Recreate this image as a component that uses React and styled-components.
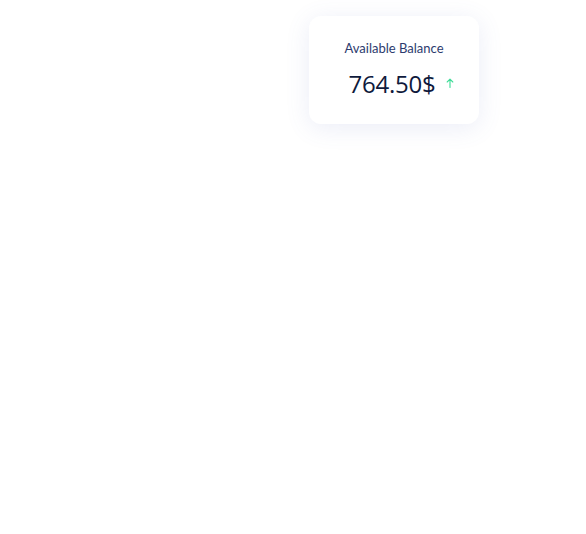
import React from 'react';
import styled, { createGlobalStyle } from "styled-components";

const Global = createGlobalStyle`
    body {
        margin: 0;
        background: #ffffff;
        font-family: "Open Sans", "Noto Sans", sans-serif;
    }
`;

export default function App() {
    return (
        <>
            <Global />
            <Page>
                <Card>
                    <Label>Available Balance</Label>
                    <Row>
                        <Amount>764.50$</Amount>
                        <Arrow viewBox="0 0 8 10" aria-hidden="true">
                            <path d="M4 9.5V1.2M1.2 4L4 1.2 6.8 4" fill="none" stroke="#3ddc97" strokeWidth="1.1" strokeLinecap="round" strokeLinejoin="round" />
                        </Arrow>
                    </Row>
                </Card>
            </Page>
        </>
    )
}

const Page = styled.main `
    width: 586px;
    height: 534px;
    display: flex;
    justify-content: flex-end;
    align-items: flex-start;
    padding: 16px 107px 0 0;
    box-sizing: border-box;
`;
const Card = styled.section `
    width: 170px;
    height: 108px;
    box-sizing: border-box;
    background: #fff;
    border-radius: 12px;
    box-shadow: 0 4px 24px rgba(90, 110, 190, 0.12);
    display: flex;
    flex-direction: column;
    align-items: center;
    padding-top: 24px;
`;
const Label = styled.span `
    font-family: Lato, "Open Sans", sans-serif;
    font-size: 13px;
    color: #2c3b6e;
    line-height: 17px;
`;
const Row = styled.div `
    display: flex;
    align-items: center;
    gap: 10px;
    margin-top: 12px;
    margin-left: 14px;
`;
const Amount = styled.span `
    font-size: 24px;
    color: #0f1a3c;
    line-height: 30px;
    letter-spacing: -0.2px;
`;
const Arrow = styled.svg `
    width: 8px;
    height: 10px;
    margin-top: -2px;
`;
